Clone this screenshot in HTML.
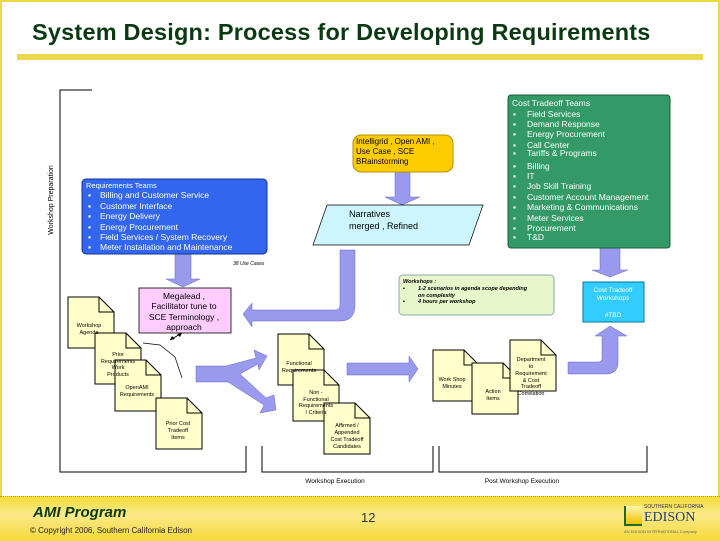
<!DOCTYPE html>
<html><head><meta charset="utf-8"><style>
html,body{margin:0;padding:0}
body{width:720px;height:540px;position:relative;overflow:hidden;background:#fff;font-family:"Liberation Sans",sans-serif}
.a{position:absolute}
</style></head><body>
<div class="a" style="left:0;top:0;width:720px;height:540px;box-sizing:border-box;border:2px solid #e8d84a;border-bottom:none"></div>
<div class="a" style="left:32px;top:19px;font-size:23.5px;font-weight:bold;color:#0b3a12;letter-spacing:0.2px">System Design: Process for Developing Requirements</div>
<div class="a" style="left:17px;top:54px;width:686px;height:6px;background:#ecd850"></div>

<svg class="a" style="left:0;top:0" width="720" height="540" xmlns="http://www.w3.org/2000/svg" font-family="Liberation Sans, sans-serif">
<defs>
<g id="doc"><path d="M0 0 H31 L46 15 V51 H0 Z" fill="#ffffcc" stroke="#000" stroke-width="1"/><path d="M31 0 V15 H46" fill="none" stroke="#000" stroke-width="1"/></g>
</defs>
<path d="M92 90 H60 V472 H246 V446" fill="none" stroke="#000"/>
<path d="M262 446 V472 H433 V446" fill="none" stroke="#000"/>
<path d="M439 446 V472 H647 V446" fill="none" stroke="#000"/>
<text x="53" y="200" font-size="7" transform="rotate(-90 53 200)" text-anchor="middle">Workshop Preparation</text>

<path d="M175 254 H191 V279 H200 L183 287 L166 279 H175 Z" fill="#9999ee" stroke="#6666cc" stroke-width="0.5"/>
<path d="M395 172 H410 V197 H420 L402 205 L385 197 H395 Z" fill="#9999ee" stroke="#6666cc" stroke-width="0.5"/>
<path d="M600 248 H620 V270 H628 L610 277 L592 270 H600 Z" fill="#9999ee" stroke="#6666cc" stroke-width="0.5"/>
<path d="M340 250 H355 V305 Q355 321 340 321 H252 V327 L243 314 L252 303 V310 H335 Q340 310 340 305 Z" fill="#9999ee" stroke="#6666cc" stroke-width="0.5"/>
<path d="M347 363 H409 V356 L418 369 L409 382 V375 H347 Z" fill="#9999ee" stroke="#6666cc" stroke-width="0.5"/>
<path d="M568 362 H598 Q602 362 602 358 V336 H595 L610 326 L627 336 H618 V362 Q618 374 606 374 H568 Z" fill="#9999ee" stroke="#6666cc" stroke-width="0.5"/>
<path d="M196 366 H226 L256 358 L254 350 L267 356 L259 370 L258 364 L240 374 L266 398 L274 395 L276 410 L260 413 L264 405 L228 382 H196 Z" fill="#9999ee" stroke="#6666cc" stroke-width="0.5"/>

<path d="M143 343 L160 345 L175 357 L182 378" fill="none" stroke="#000" stroke-width="0.7"/>
<path d="M170 340 L182 333" stroke="#000" stroke-width="1"/>
<path d="M182 333 L177 334 L180 337 Z M170 340 L175 339 L172 336 Z" fill="#000"/>

<rect x="82" y="179" width="185" height="75" rx="4" fill="#3366ee" stroke="#1a3399"/>
<text fill="#fff" font-size="7.5"><tspan x="86" y="188">Requirements Teams</tspan></text>
<g fill="#fff" font-size="8.5">
<text x="88" y="198">▪</text><text x="100" y="198">Billing and Customer Service</text>
<text x="88" y="209">▪</text><text x="100" y="209">Customer Interface</text>
<text x="88" y="219">▪</text><text x="100" y="219">Energy Delivery</text>
<text x="88" y="230">▪</text><text x="100" y="230">Energy Procurement</text>
<text x="88" y="240">▪</text><text x="100" y="240">Field Services   / System Recovery</text>
<text x="88" y="250">▪</text><text x="100" y="250">Meter Installation and Maintenance</text>
</g>
<text x="233" y="265" font-size="5" font-style="italic">38 Use Cases</text>

<rect x="353" y="135" width="100" height="37" rx="8" fill="#ffcc00" stroke="#b38f00"/>
<text font-size="8" fill="#000"><tspan x="356" y="144">Intelligrid  , Open AMI  ,</tspan><tspan x="356" y="154">Use Case  , SCE</tspan><tspan x="356" y="164">BRainstorming</tspan></text>

<path d="M327 205 H483 L469 245 H313 Z" fill="#ccf5ff" stroke="#000" stroke-width="0.7"/>
<text font-size="9"><tspan x="349" y="217">Narratives</tspan><tspan x="349" y="229">merged  , Refined</tspan></text>

<rect x="508" y="95" width="162" height="153" rx="3" fill="#339966" stroke="#1d5c3a"/>
<g fill="#fff" font-size="8.5">
<text x="512" y="106">Cost Tradeoff Teams</text>
<text x="513" y="117">▪</text><text x="527" y="117">Field Services</text>
<text x="513" y="127">▪</text><text x="527" y="127">Demand Response</text>
<text x="513" y="137">▪</text><text x="527" y="137">Energy Procurement</text>
<text x="513" y="148">▪</text><text x="527" y="148">Call Center</text>
<text x="513" y="156">▪</text><text x="527" y="156">Tariffs &amp; Programs</text>
<text x="513" y="169">▪</text><text x="527" y="169">Billing</text>
<text x="513" y="179">▪</text><text x="527" y="179">IT</text>
<text x="513" y="189">▪</text><text x="527" y="189">Job Skill Training</text>
<text x="513" y="200">▪</text><text x="527" y="200">Customer Account Management</text>
<text x="513" y="210">▪</text><text x="527" y="210">Marketing &amp; Communications</text>
<text x="513" y="221">▪</text><text x="527" y="221">Meter Services</text>
<text x="513" y="231">▪</text><text x="527" y="231">Procurement</text>
<text x="513" y="240">▪</text><text x="527" y="240">T&amp;D</text>
</g>

<rect x="583" y="282" width="61" height="40" fill="#33ccff" stroke="#0077aa"/>
<text fill="#fff" font-size="6.5" text-anchor="middle"><tspan x="613" y="292">Cost Tradeoff</tspan><tspan x="613" y="300">Workshops</tspan><tspan x="613" y="317">#TBD</tspan></text>

<rect x="399" y="275" width="155" height="40" rx="4" fill="#e6f7cc" stroke="#8aa"/>
<g font-size="5.5" font-style="italic" font-weight="bold"><text x="403" y="283">Workshops :</text>
<text x="403" y="290">▪</text><text x="418" y="290">1-2 scenarios in agenda scope depending</text><text x="418" y="297">on complexity</text>
<text x="403" y="303">▪</text><text x="418" y="303">4 hours per workshop</text></g>

<rect x="139" y="288" width="92" height="45" fill="#ffccff" stroke="#000" stroke-width="0.8"/>
<text font-size="8.5" text-anchor="middle"><tspan x="184" y="299">Megalead  ,</tspan><tspan x="184" y="309">Facilitator tune to</tspan><tspan x="184" y="320">SCE Terminology   ,</tspan><tspan x="184" y="330">approach</tspan></text>

<use href="#doc" x="68" y="297"/>
<use href="#doc" x="95" y="333"/>
<use href="#doc" x="115" y="360"/>
<use href="#doc" x="156" y="398"/>
<use href="#doc" x="278" y="334"/>
<use href="#doc" x="293" y="370"/>
<use href="#doc" x="324" y="403"/>
<use href="#doc" x="433" y="350"/>
<use href="#doc" x="472" y="363"/>
<use href="#doc" x="510" y="340"/>
<g font-size="5.5" text-anchor="middle">
<text x="89" y="327">Workshop</text><text x="89" y="334">Agenda</text>
<text x="118" y="356">Prior</text><text x="118" y="363">Requirements</text><text x="118" y="369">Work</text><text x="118" y="376">Products</text>
<text x="137" y="389">OpenAMI</text><text x="137" y="396">Requirements</text>
<text x="178" y="425">Prior Cost</text><text x="178" y="432">Tradeoff</text><text x="178" y="439">Items</text>
<text x="299" y="365">Functional</text><text x="299" y="372">Requirements</text>
<text x="316" y="394">Non -</text><text x="316" y="401">Functional</text><text x="316" y="407">Requirements</text><text x="316" y="414">/ Criteria</text>
<text x="347" y="427">Affirmed  /</text><text x="347" y="434">Appended</text><text x="347" y="441">Cost Tradeoff</text><text x="347" y="448">Candidates</text>
<text x="452" y="381">Work Shop</text><text x="452" y="388">Minutes</text>
<text x="493" y="393">Action</text><text x="493" y="400">Items</text>
<text x="531" y="361">Department</text><text x="531" y="368">to</text><text x="531" y="375">Requirement</text><text x="531" y="382">&amp; Cost</text><text x="531" y="388">Tradeoff</text><text x="531" y="395">Correlation</text>
</g>
<text x="335" y="483" font-size="6.5" text-anchor="middle">Workshop Execution</text>
<text x="522" y="483" font-size="6.5" text-anchor="middle">Post Workshop Execution</text>
</svg>

<div class="a" style="left:0;top:496px;width:720px;height:44px;background:linear-gradient(#f2dc3a,#fbe98a 40%,#f5d93a);border-top:1px dotted #c8a800"></div>
<div class="a" style="left:33px;top:504px;font-size:15px;font-weight:bold;font-style:italic;color:#0b3a12">AMI Program</div>
<div class="a" style="left:30px;top:526px;font-size:8px;color:#222">© Copyright 2006, Southern California Edison</div>
<div class="a" style="left:361px;top:510px;font-size:13px;color:#333">12</div>
<div class="a" style="left:624px;top:506px;width:16px;height:18px;background:linear-gradient(#fff6b0,#f2c000);border-left:2px solid #1d6a2a;border-bottom:2px solid #1d6a2a"></div>
<div class="a" style="left:644px;top:504px;font-size:5px;color:#335">SOUTHERN CALIFORNIA</div>
<div class="a" style="left:644px;top:510px;font-family:'Liberation Serif',serif;font-size:14px;color:#2a3d6a">EDISON</div>
<div class="a" style="left:624px;top:529px;font-size:4px;color:#666">AN EDISON INTERNATIONAL Company</div>
</body></html>
